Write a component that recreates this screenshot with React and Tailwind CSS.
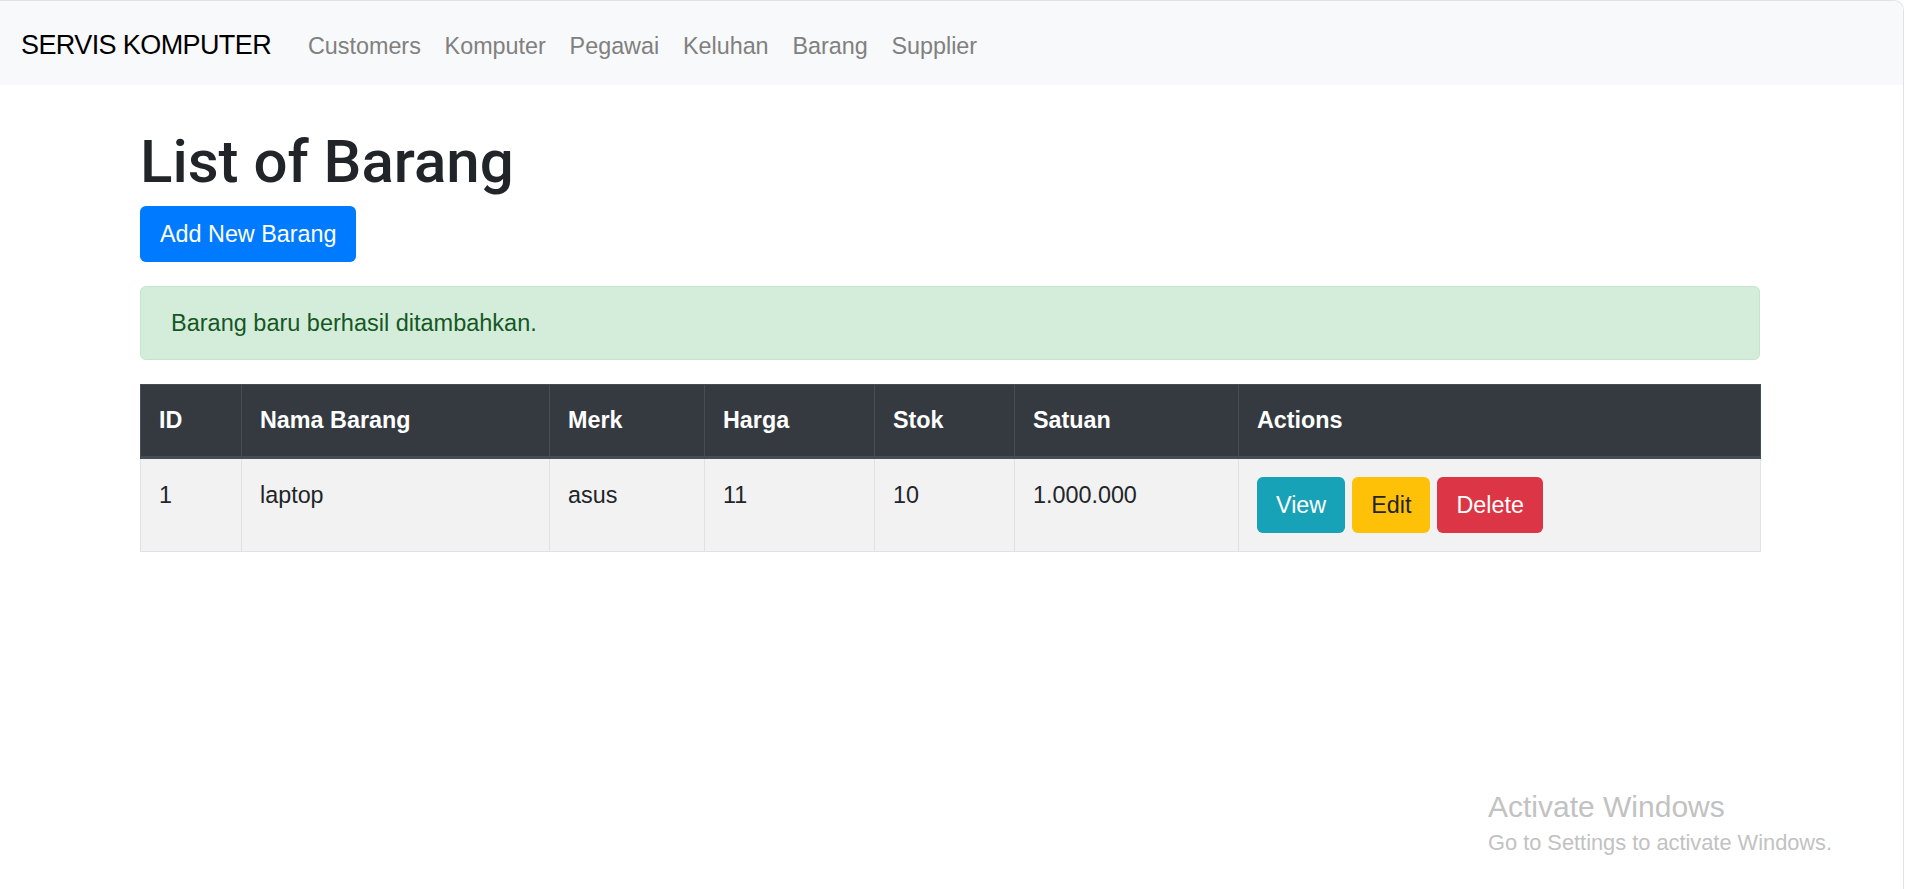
import React from "react";

const cols = [
  { label: "ID", w: "w-[101px]" },
  { label: "Nama Barang", w: "w-[308px]" },
  { label: "Merk", w: "w-[155px]" },
  { label: "Harga", w: "w-[170px]" },
  { label: "Stok", w: "w-[140px]" },
  { label: "Satuan", w: "w-[224px]" },
  { label: "Actions", w: "w-[522px]" },
];

const navLinks = ["Customers", "Komputer", "Pegawai", "Keluhan", "Barang", "Supplier"];

export default function App() {
  return (
    <div className="relative w-[1904px] min-h-[889px] bg-white border-t border-r border-[#e2e2e2] rounded-tr-[10px] overflow-hidden font-['Liberation_Sans',Arial,sans-serif] text-[#212529]">
      {/* Navbar */}
      <nav className="h-[84px] bg-[#f8f9fa] flex items-baseline pt-[24px] pl-[21px]">
        <span className="text-[27px] leading-[40px] tracking-[-0.6px] text-black mr-[25px]">
          SERVIS KOMPUTER
        </span>
        {navLinks.map((l) => (
          <span key={l} className="text-[23.35px] leading-[35px] px-[11.9px] text-[#808080]">
            {l}
          </span>
        ))}
      </nav>

      {/* Container */}
      <div className="ml-[140px] w-[1620px] pt-[42px]">
        <h1 className="font-['Roboto',sans-serif] font-medium text-[60px] leading-[70px] mb-[9px] text-[#212529]">
          List of Barang
        </h1>
        <button className="h-[56px] px-[20px] rounded-[5.8px] bg-[#007bff] text-white text-[23.35px] leading-[35px]">
          Add New Barang
        </button>

        <div className="mt-[24px] mb-[24px] h-[74px] border border-[#c3e6cb] bg-[#d4edda] rounded-[5.8px] px-[30px] flex items-center text-[#155724] text-[23.5px] leading-[35px]">
          Barang baru berhasil ditambahkan.
        </div>

        <table className="w-[1620px] border-collapse table-fixed text-[23.35px] leading-[35px]">
          <thead>
            <tr className="bg-[#343a40] text-white">
              {cols.map((c) => (
                <th
                  key={c.label}
                  className={`${c.w} text-left font-bold align-bottom px-[18px] py-[18px] border border-[#454d55] border-b-[3px]`}
                >
                  {c.label}
                </th>
              ))}
            </tr>
          </thead>
          <tbody>
            <tr className="bg-[#f2f2f2]">
              <td className="align-top px-[18px] pt-[19px] pb-[18px] border border-[#dee2e6]">1</td>
              <td className="align-top px-[18px] pt-[19px] pb-[18px] border border-[#dee2e6]">laptop</td>
              <td className="align-top px-[18px] pt-[19px] pb-[18px] border border-[#dee2e6]">asus</td>
              <td className="align-top px-[18px] pt-[19px] pb-[18px] border border-[#dee2e6]">11</td>
              <td className="align-top px-[18px] pt-[19px] pb-[18px] border border-[#dee2e6]">10</td>
              <td className="align-top px-[18px] pt-[19px] pb-[18px] border border-[#dee2e6]">1.000.000</td>
              <td className="align-top px-[18px] pt-[18px] pb-[18px] border border-[#dee2e6]">
                <div className="flex gap-[7px]">
                  <button className="h-[56px] px-[19px] rounded-[5.8px] bg-[#17a2b8] text-white">View</button>
                  <button className="h-[56px] px-[19px] rounded-[5.8px] bg-[#ffc107] text-[#212529]">Edit</button>
                  <button className="h-[56px] px-[19px] rounded-[5.8px] bg-[#dc3545] text-white">Delete</button>
                </div>
              </td>
            </tr>
          </tbody>
        </table>
      </div>

      {/* Windows activation watermark */}
      <div className="absolute left-[1488px] top-[791px] text-[#c2c2c2] pointer-events-none">
        <div className="text-[30px] leading-none">Activate Windows</div>
        <div className="text-[21.8px] leading-none mt-[10px]">Go to Settings to activate Windows.</div>
      </div>
    </div>
  );
}
